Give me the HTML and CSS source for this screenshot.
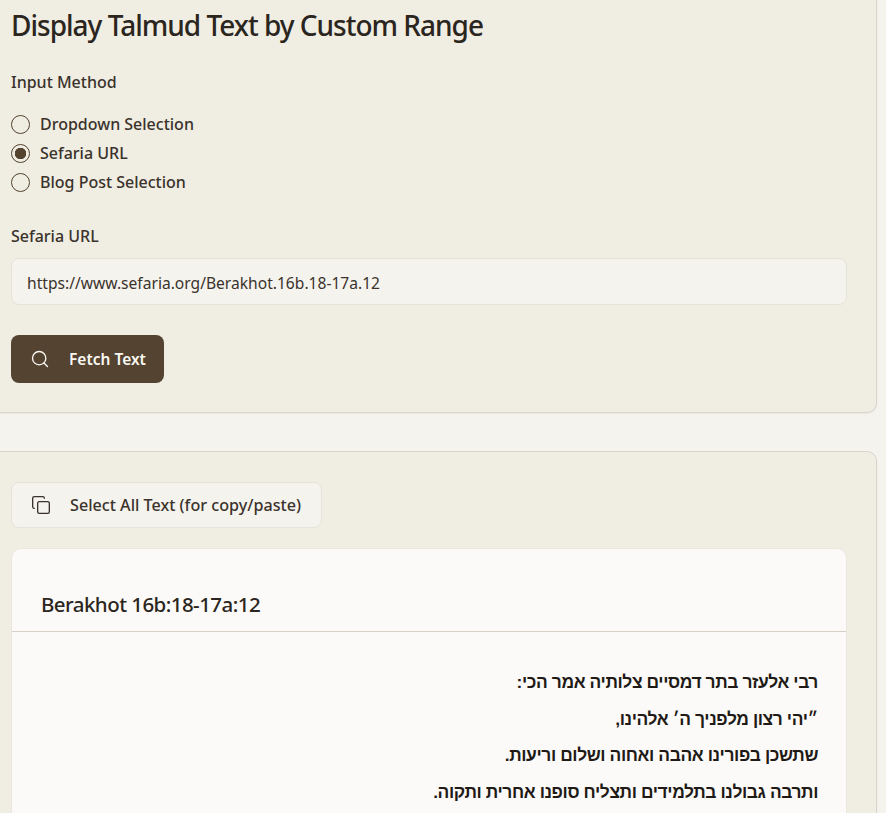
FILE: index.html
```html
<!DOCTYPE html>
<html lang="en">
<head>
  <meta charset="UTF-8">
  <title>Display Talmud Text by Custom Range</title>
  <link rel="stylesheet" href="styles.css">
</head>
<body>
  <section class="panel panel-form">
    <h1>Display Talmud Text by Custom Range</h1>
    <div class="field-label method-label">Input Method</div>
    <div class="radio-group">
      <label class="radio"><input type="radio" name="method"> Dropdown Selection</label>
      <label class="radio"><input type="radio" name="method" checked> Sefaria URL</label>
      <label class="radio"><input type="radio" name="method"> Blog Post Selection</label>
    </div>
    <label class="field-label url-label" for="url">Sefaria URL</label>
    <input class="url-input" id="url" type="text" value="https://www.sefaria.org/Berakhot.16b.18-17a.12">
    <button class="btn btn-primary" type="button">
      <svg width="20" height="20" viewBox="0 0 24 24" fill="none" stroke="currentColor" stroke-width="1.6" stroke-linecap="round"><circle cx="11" cy="11" r="8"/><path d="M21 21l-4.3-4.3"/></svg>
      Fetch Text
    </button>
  </section>

  <section class="panel panel-result">
    <button class="btn btn-secondary" type="button">
      <svg width="20" height="20" viewBox="0 0 24 24" fill="none" stroke="currentColor" stroke-width="1.6" stroke-linecap="round" stroke-linejoin="round"><rect x="8" y="8" width="14" height="14" rx="2"/><path d="M4 16c-1.1 0-2-.9-2-2V4c0-1.1.9-2 2-2h10c1.1 0 2 .9 2 2"/></svg>
      Select All Text (for copy/paste)
    </button>
    <article class="text-card">
      <h2>Berakhot 16b:18-17a:12</h2>
      <div class="hebrew" dir="rtl" lang="he">
        <p>רבי אלעזר בתר דמסיים צלותיה אמר הכי:</p>
        <p>״יהי רצון מלפניך ה׳ אלהינו,</p>
        <p>שתשכן בפורינו אהבה ואחוה ושלום וריעות.</p>
        <p>ותרבה גבולנו בתלמידים ותצליח סופנו אחרית ותקוה.</p>
      </div>
    </article>
  </section>
</body>
</html>
```

FILE: styles.css
```css
html, body {
  height: 813px;
  overflow: hidden;
}
body {
  margin: 0;
  background-color: #f5f3ee;
  color: #2b2520;
  font-family: 'Noto Sans', sans-serif;
}
.panel {
  background-color: #f0ede3;
  border: 1px solid #d9d5ca;
  border-radius: 10px;
  box-shadow: 0 1px 2px rgba(0, 0, 0, 0.05);
  margin-left: -20px;
  margin-right: 9px;
  padding-left: 30px;
  padding-right: 29px;
}
.panel-form {
  margin-top: -10px;
  padding-top: 15px;
  padding-bottom: 29px;
}
.panel-result {
  margin-top: 38px;
  padding-top: 30px;
}
h1 {
  margin: 0;
  font-size: 28px;
  line-height: 38px;
  font-weight: 500;
  letter-spacing: -1px;
  color: #2b2520;
}
.field-label {
  display: block;
  font-size: 16px;
  line-height: 22px;
  font-weight: 500;
  color: #3a322b;
}
.method-label {
  margin-top: 27px;
}
.radio-group {
  display: flex;
  flex-direction: column;
  gap: 7px;
  margin-top: 20px;
}
.radio {
  display: flex;
  align-items: center;
  gap: 10px;
  height: 22px;
  font-size: 16px;
  font-weight: 500;
  color: #3a322b;
}
.radio input {
  width: 19px;
  height: 19px;
  margin: 0;
  appearance: none;
  background: transparent;
  border: 1px solid #54432f;
  border-radius: 50%;
}
.radio input:checked {
  background: radial-gradient(circle, #54432f 0, #54432f 5.5px, transparent 6px);
}
.url-label {
  margin-top: 32px;
}
.url-input {
  display: block;
  box-sizing: border-box;
  width: 100%;
  height: 47px;
  margin-top: 11px;
  padding: 2px 15px 0;
  background-color: #f5f3ee;
  border: 1px solid #e6e3da;
  border-radius: 8px;
  font-family: inherit;
  font-size: 15.6px;
  color: #3a322b;
}
.btn {
  display: flex;
  align-items: center;
  border-radius: 8px;
  font-family: inherit;
  font-size: 15.5px;
  font-weight: 500;
  cursor: pointer;
}
.btn-primary {
  gap: 19px;
  height: 48px;
  margin-top: 30px;
  padding: 0 18px 0 19px;
  background-color: #544331;
  color: #faf8f3;
  border: none;
  font-weight: 600;
}
.btn-secondary {
  gap: 19px;
  height: 46px;
  padding: 0 20px 0 19px;
  background-color: #f5f3ee;
  color: #3a322b;
  border: 1px solid #e6e3da;
  font-size: 16.15px;
}
.text-card {
  margin-top: 20px;
  background-color: #fbfaf8;
  border: 1px solid #ebe7de;
  border-radius: 10px 10px 0 0;
}
h2 {
  margin: 0;
  padding: 40px 29px 12px;
  border-bottom: 1px solid #d6d0c6;
  font-size: 20.5px;
  line-height: 30px;
  font-weight: 500;
  letter-spacing: -0.55px;
  color: #2b2520;
}
.hebrew {
  padding: 40px 28px;
  font-family: 'Liberation Sans', sans-serif;
  font-size: 17.4px;
  font-weight: 700;
  letter-spacing: -0.4px;
  color: #1f1a16;
}
.hebrew p {
  margin: 0 0 15.67px;
  line-height: 21px;
}
```
